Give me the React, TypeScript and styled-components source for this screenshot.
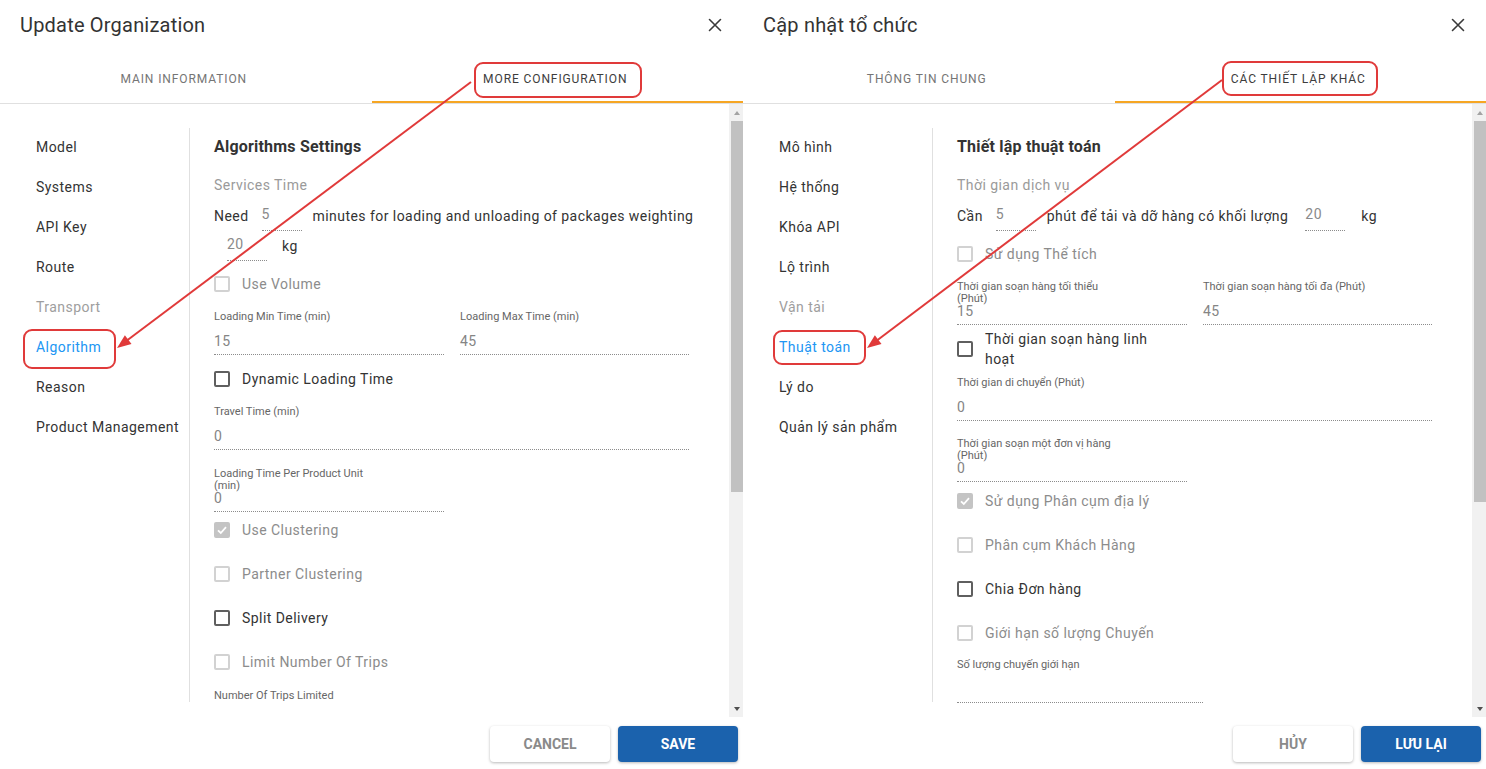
import React from "react";
import styled, { createGlobalStyle, css } from "styled-components";

const GlobalStyle = createGlobalStyle`
  html, body { margin: 0; padding: 0; background: #fff; }
  body {
    font-family: Roboto, "Noto Sans", "Liberation Sans", sans-serif;
    color: #333;
  }
  * { box-sizing: border-box; }
`;

const Page = styled.div`
  position: relative;
  display: flex;
  width: 1486px;
  height: 769px;
  overflow: hidden;
  background: #fff;
`;

const Dialog = styled.section`
  width: 743px;
  height: 769px;
  flex: none;
  display: flex;
  flex-direction: column;
  background: #fff;
`;

const Header = styled.header`
  flex: none;
  height: 54px;
  padding: 0 21px 4px 20px;
  display: flex;
  align-items: center;
  justify-content: space-between;
`;

const Title = styled.h2`
  margin: 0;
  font-size: 20px;
  line-height: 24px;
  font-weight: 400;
  letter-spacing: 0.2px;
  color: #333;
`;

const CloseButton = styled.button`
  border: 0;
  background: none;
  padding: 0;
  width: 14px;
  height: 14px;
  display: flex;
  color: #333;
  cursor: pointer;
`;

const TabBar = styled.div`
  flex: none;
  display: flex;
  height: 50px;
  border-bottom: 1px solid #e0e0e0;
`;

const Tab = styled.div<{ $active?: boolean }>`
  position: relative;
  flex: 1;
  display: flex;
  align-items: center;
  justify-content: center;
  padding-right: 4px;
  font-size: 12px;
  font-weight: 400;
  letter-spacing: 0.9px;
  text-transform: uppercase;
  color: ${(p) => (p.$active ? "#3d3d3d" : "#757575")};
  ${(p) =>
    p.$active &&
    css`
      &::after {
        content: "";
        position: absolute;
        left: 0;
        right: 0;
        bottom: 0;
        height: 2px;
        background: #f6a623;
      }
    `}
`;

const Body = styled.div`
  flex: none;
  height: 613px;
  display: flex;
`;

const Main = styled.div`
  flex: 1;
  min-width: 0;
  display: flex;
  padding: 23px 0 15px;
  overflow: hidden;
`;

const Sidebar = styled.nav`
  flex: none;
  width: 190px;
  margin-top: 1px;
  border-right: 1px solid #e0e0e0;
`;

type NavState = "normal" | "active" | "muted";

const NavItem = styled.div<{ $state: NavState }>`
  height: 40px;
  line-height: 39px;
  padding-left: 36px;
  font-size: 14px;
  letter-spacing: 0.45px;
  white-space: nowrap;
  color: ${(p) =>
    p.$state === "active" ? "#2196f3" : p.$state === "muted" ? "#9e9e9e" : "#333"};
`;

const Content = styled.div`
  flex: 1;
  min-width: 0;
  padding: 1px 24px 0;
  display: flex;
  flex-direction: column;
`;

const Heading = styled.h3`
  margin: 7px 0 0;
  font-size: 16px;
  line-height: 24px;
  font-weight: 700;
  letter-spacing: 0.2px;
  color: #333;
`;

const SubLabel = styled.div`
  margin-top: 16px;
  font-size: 14px;
  line-height: 20px;
  letter-spacing: 0.45px;
  color: #9a9a9a;
`;

const Sentence = styled.div`
  margin-top: 6px;
  display: flex;
  flex-wrap: wrap;
  align-items: center;
  font-size: 14px;
  letter-spacing: 0.45px;
  color: #333;
`;

const Words = styled.span<{ $unit?: boolean }>`
  line-height: 30px;
  white-space: nowrap;
  margin-left: ${(p) => (p.$unit ? "4px" : "0")};
`;

const InlineInput = styled.span<{ $wide?: boolean }>`
  width: 40px;
  height: 30px;
  margin: ${(p) => (p.$wide ? "0 12px 0 17px" : "0 11px 0 13px")};
  padding-bottom: 4px;
  border-bottom: 1px dotted #8c8c8c;
  display: flex;
  align-items: center;
  color: #8a8a8a;
`;

const CheckRow = styled.label<{ $mt: number }>`
  margin-top: ${(p) => p.$mt}px;
  min-height: 44px;
  display: flex;
  align-items: center;
  gap: 12px;
`;

const Box = styled.span<{ $disabled?: boolean; $checked?: boolean }>`
  flex: none;
  width: 16px;
  height: 16px;
  border-radius: 2px;
  border: 2px solid
    ${(p) => (p.$checked ? "#c4c4c4" : p.$disabled ? "#d2d2d2" : "#5f5f5f")};
  background: ${(p) => (p.$checked ? "#c4c4c4" : "transparent")};
  display: flex;
  align-items: center;
  justify-content: center;
`;

const CheckText = styled.span<{ $disabled?: boolean }>`
  max-width: 186px;
  font-size: 14px;
  line-height: 20px;
  letter-spacing: 0.45px;
  color: ${(p) => (p.$disabled ? "#8c8c8c" : "#333")};
`;

const FieldGrid = styled.div<{ $mt: number }>`
  margin-top: ${(p) => p.$mt}px;
  display: grid;
  grid-template-columns: 230px 229px;
  column-gap: 16px;
`;

const FieldWrap = styled.div<{ $mt: number; $w?: number }>`
  position: relative;
  margin-top: ${(p) => p.$mt}px;
  padding-top: 16px;
  width: ${(p) => (p.$w ? `${p.$w}px` : "auto")};
  flex: none;
`;

const FieldLabel = styled.span`
  position: absolute;
  top: 0;
  left: 0;
  max-width: 170px;
  font-size: 11px;
  line-height: 12px;
  color: #666;
`;

const FieldValue = styled.div`
  height: 28px;
  border-bottom: 1px dotted #8c8c8c;
  display: flex;
  align-items: center;
  font-size: 14px;
  letter-spacing: 0.3px;
  color: #858585;
`;

const ScrollTrack = styled.div`
  flex: none;
  width: 14px;
  background: #f1f1f1;
  display: flex;
  flex-direction: column;
`;

const ScrollArrow = styled.div<{ $dir: "up" | "down" }>`
  flex: none;
  height: 17px;
  display: flex;
  align-items: center;
  justify-content: center;
  padding-left: 2px;
  &::before {
    content: "";
    border-left: 3.5px solid transparent;
    border-right: 3.5px solid transparent;
    ${(p) =>
      p.$dir === "up"
        ? css`border-bottom: 4px solid #a3a3a3;`
        : css`border-top: 4px solid #505050;`}
  }
`;

const ScrollThumb = styled.div<{ $h: number }>`
  flex: none;
  height: ${(p) => p.$h}px;
  margin-left: 2px;
  background: #c1c1c1;
`;

const ScrollRest = styled.div`
  flex: 1;
`;

const Footer = styled.footer`
  flex: none;
  height: 52px;
  display: flex;
  justify-content: flex-end;
  align-items: flex-start;
  gap: 8px;
  padding: 9px 5px 0 0;
`;

const Button = styled.button<{ $primary?: boolean }>`
  width: 120px;
  height: 36px;
  border: 0;
  border-radius: 4px;
  font-family: inherit;
  font-size: 14px;
  font-weight: 700;
  text-transform: uppercase;
  cursor: pointer;
  background: ${(p) => (p.$primary ? "#1b62ad" : "#fff")};
  color: ${(p) => (p.$primary ? "#fff" : "#8a8a8a")};
  box-shadow: 0 1px 3px rgba(0, 0, 0, 0.28);
`;

const Overlay = styled.svg`
  position: absolute;
  left: 0;
  top: 0;
  pointer-events: none;
`;

function CloseIcon() {
  return (
    <svg width="14" height="14" viewBox="0 0 14 14" fill="none">
      <path d="M1.5 1.5 L12.5 12.5 M12.5 1.5 L1.5 12.5" stroke="#3a3a3a" strokeWidth="1.6" strokeLinecap="round" />
    </svg>
  );
}

function Check({
  label,
  mt = 0,
  disabled,
  checked,
}: {
  label: string;
  mt?: number;
  disabled?: boolean;
  checked?: boolean;
}) {
  return (
    <CheckRow $mt={mt}>
      <Box $disabled={disabled} $checked={checked}>
        {checked && (
          <svg width="12" height="12" viewBox="0 0 12 12" fill="none">
            <path d="M2 6.3 L4.8 9 L10 3.2" stroke="#fff" strokeWidth="1.8" />
          </svg>
        )}
      </Box>
      <CheckText $disabled={disabled}>{label}</CheckText>
    </CheckRow>
  );
}

function Field({
  label,
  value,
  mt = 0,
  w,
}: {
  label: string;
  value: string;
  mt?: number;
  w?: number;
}) {
  return (
    <FieldWrap $mt={mt} $w={w}>
      <FieldLabel>{label}</FieldLabel>
      <FieldValue>{value}</FieldValue>
    </FieldWrap>
  );
}

type NavEntry = { label: string; state: NavState };

function OrgDialog({
  title,
  tabs,
  nav,
  thumb,
  cancel,
  save,
  children,
}: {
  title: string;
  tabs: [string, string];
  nav: NavEntry[];
  thumb: number;
  cancel: string;
  save: string;
  children: React.ReactNode;
}) {
  return (
    <Dialog>
      <Header>
        <Title>{title}</Title>
        <CloseButton aria-label="close">
          <CloseIcon />
        </CloseButton>
      </Header>
      <TabBar>
        <Tab>{tabs[0]}</Tab>
        <Tab $active>{tabs[1]}</Tab>
      </TabBar>
      <Body>
        <Main>
          <Sidebar>
            {nav.map((n) => (
              <NavItem key={n.label} $state={n.state}>
                {n.label}
              </NavItem>
            ))}
          </Sidebar>
          <Content>{children}</Content>
        </Main>
        <ScrollTrack>
          <ScrollArrow $dir="up" />
          <ScrollThumb $h={thumb} />
          <ScrollRest />
          <ScrollArrow $dir="down" />
        </ScrollTrack>
      </Body>
      <Footer>
        <Button>{cancel}</Button>
        <Button $primary>{save}</Button>
      </Footer>
    </Dialog>
  );
}

function Arrow({ x1, y1, x2, y2 }: { x1: number; y1: number; x2: number; y2: number }) {
  const dx = x2 - x1;
  const dy = y2 - y1;
  const len = Math.hypot(dx, dy);
  const ux = dx / len;
  const uy = dy / len;
  const L = 14;
  const W = 5.5;
  const bx = x2 - ux * L;
  const by = y2 - uy * L;
  const nx = -uy;
  const ny = ux;
  const pts = `${x2},${y2} ${bx + nx * W},${by + ny * W} ${bx - nx * W},${by - ny * W}`;
  return (
    <g>
      <line x1={x1} y1={y1} x2={bx + ux * 2} y2={by + uy * 2} stroke="#e03a3a" strokeWidth="2" />
      <polygon points={pts} fill="#e03a3a" />
    </g>
  );
}

function Annotations() {
  return (
    <Overlay width="1486" height="769" viewBox="0 0 1486 769">
      <g fill="none" stroke="#e03a3a" strokeWidth="2">
        <rect x="475" y="63" width="166" height="34" rx="8" />
        <rect x="24" y="330" width="91" height="38" rx="8" />
        <rect x="1223" y="62" width="154" height="33" rx="8" />
        <rect x="774" y="331" width="91" height="33" rx="8" />
      </g>
      <Arrow x1={471} y1={82} x2={117} y2={348} />
      <Arrow x1={1222} y1={80} x2={867} y2={348} />
    </Overlay>
  );
}

const enNav: NavEntry[] = [
  { label: "Model", state: "normal" },
  { label: "Systems", state: "normal" },
  { label: "API Key", state: "normal" },
  { label: "Route", state: "normal" },
  { label: "Transport", state: "muted" },
  { label: "Algorithm", state: "active" },
  { label: "Reason", state: "normal" },
  { label: "Product Management", state: "normal" },
];

const viNav: NavEntry[] = [
  { label: "Mô hình", state: "normal" },
  { label: "Hệ thống", state: "normal" },
  { label: "Khóa API", state: "normal" },
  { label: "Lộ trình", state: "normal" },
  { label: "Vận tải", state: "muted" },
  { label: "Thuật toán", state: "active" },
  { label: "Lý do", state: "normal" },
  { label: "Quản lý sản phẩm", state: "normal" },
];

export default function App() {
  return (
    <>
      <GlobalStyle />
      <Page>
        <OrgDialog
          title="Update Organization"
          tabs={["Main Information", "More Configuration"]}
          nav={enNav}
          thumb={371}
          cancel="Cancel"
          save="Save"
        >
          <Heading>Algorithms Settings</Heading>
          <SubLabel>Services Time</SubLabel>
          <Sentence>
            <Words>Need</Words>
            <InlineInput>5</InlineInput>
            <Words>minutes for loading and unloading of packages weighting</Words>
            <InlineInput>20</InlineInput>
            <Words $unit>kg</Words>
          </Sentence>
          <Check mt={1} disabled label="Use Volume" />
          <FieldGrid $mt={5}>
            <Field label="Loading Min Time (min)" value="15" />
            <Field label="Loading Max Time (min)" value="45" />
          </FieldGrid>
          <Check mt={2} label="Dynamic Loading Time" />
          <Field mt={5} w={475} label="Travel Time (min)" value="0" />
          <Field mt={18} w={230} label="Loading Time Per Product Unit (min)" value="0" />
          <Check mt={-4} disabled checked label="Use Clustering" />
          <Check disabled label="Partner Clustering" />
          <Check label="Split Delivery" />
          <Check disabled label="Limit Number Of Trips" />
          <Field mt={6} w={246} label="Number Of Trips Limited" value="" />
        </OrgDialog>
        <OrgDialog
          title="Cập nhật tổ chức"
          tabs={["Thông tin chung", "Các thiết lập khác"]}
          nav={viNav}
          thumb={381}
          cancel="Hủy"
          save="Lưu lại"
        >
          <Heading>Thiết lập thuật toán</Heading>
          <SubLabel>Thời gian dịch vụ</SubLabel>
          <Sentence>
            <Words>Cần</Words>
            <InlineInput>5</InlineInput>
            <Words>phút để tải và dỡ hàng có khối lượng</Words>
            <InlineInput $wide>20</InlineInput>
            <Words $unit>kg</Words>
          </Sentence>
          <Check mt={1} disabled label="Sử dụng Thể tích" />
          <FieldGrid $mt={5}>
            <Field label="Thời gian soạn hàng tối thiểu (Phút)" value="15" />
            <Field label="Thời gian soạn hàng tối đa (Phút)" value="45" />
          </FieldGrid>
          <Check mt={2} label="Thời gian soạn hàng linh hoạt" />
          <Field mt={6} w={475} label="Thời gian di chuyển (Phút)" value="0" />
          <Field mt={17} w={230} label="Thời gian soạn một đơn vị hàng (Phút)" value="0" />
          <Check mt={-3} disabled checked label="Sử dụng Phân cụm địa lý" />
          <Check disabled label="Phân cụm Khách Hàng" />
          <Check label="Chia Đơn hàng" />
          <Check disabled label="Giới hạn số lượng Chuyến" />
          <Field mt={4} w={246} label="Số lượng chuyến giới hạn" value="" />
        </OrgDialog>
        <Annotations />
      </Page>
    </>
  );
}
